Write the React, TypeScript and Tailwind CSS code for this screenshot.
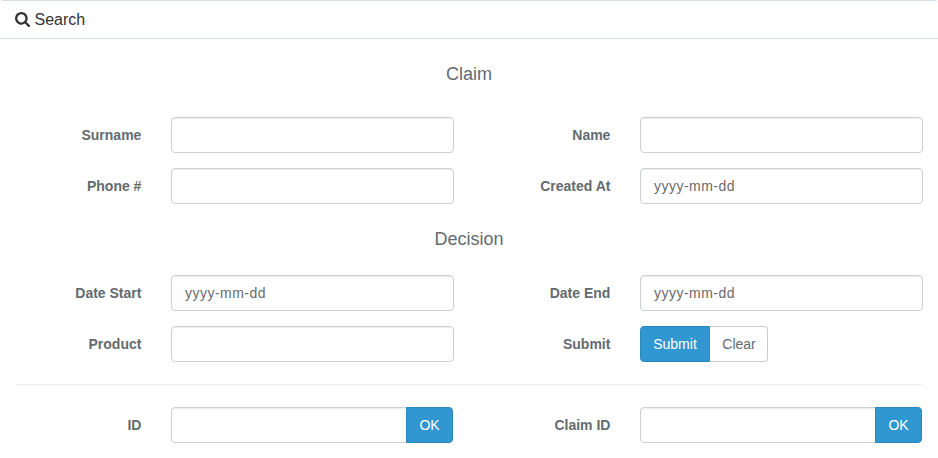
import type { ReactNode } from "react";

const controlClass =
  "block h-9 w-full min-w-0 border border-[#ccd0d2] bg-white pr-3 pl-[13px] pb-px text-sm text-[#555] shadow-[inset_0_1px_1px_rgba(0,0,0,0.075)] outline-none placeholder:text-[#6a6a6a] placeholder:tracking-[0.48px]";

function SearchIcon() {
  return (
    <svg viewBox="64 128 1664 1664" className="size-[15px]" fill="currentColor" aria-hidden="true">
      <path d="M1216 832q0-185-131.5-316.5t-316.5-131.5-316.5 131.5-131.5 316.5 131.5 316.5 316.5 131.5 316.5-131.5 131.5-316.5zm512 832q0 52-38 90t-90 38q-54 0-90-38l-343-342q-179 124-399 124-143 0-273.5-55.5t-225-150-150-225-55.5-273.5 55.5-273.5 150-225 225-150 273.5-55.5 273.5 55.5 225 150 150 225 55.5 273.5q0 220-124 399l343 343q37 37 37 90z" />
    </svg>
  );
}

function Field({ label, children }: { label: string; children: ReactNode }) {
  return (
    <div className="flex h-9 items-center pr-[15px]">
      <label className="w-[142px] shrink-0 pr-[0.6px] pb-px text-right text-sm font-bold text-[#636b6f]">{label}</label>
      <div className="ml-[29px] flex w-[283px]">{children}</div>
    </div>
  );
}

function TextField({ label, placeholder }: { label: string; placeholder?: string }) {
  return (
    <Field label={label}>
      <input type="text" aria-label={label} placeholder={placeholder} className={`${controlClass} rounded-[4px]`} />
    </Field>
  );
}

function LookupField({ label }: { label: string }) {
  return (
    <Field label={label}>
      <input type="text" aria-label={label} className={`${controlClass} rounded-l-[4px]`} />
      <button className="-ml-px mr-px h-9 w-[47px] shrink-0 rounded-r-[4px] border border-[#2a88bd] bg-[#3097d1] text-sm text-white">
        OK
      </button>
    </Field>
  );
}

export default function App() {
  return (
    <main className="h-[458px] w-full overflow-hidden rounded-[3px] bg-white font-['Liberation_Sans',Arial,sans-serif]">
      <header className="flex h-[39px] items-center gap-[4.5px] rounded-t-[3px] border-y border-[#d3e0e9] pl-[15px] text-[#333]">
        <SearchIcon />
        <h3 className="text-base">Search</h3>
      </header>
      <h4 className="mt-[25px] text-center text-lg leading-5 text-[#636b6f]">Claim</h4>
      <section className="mt-[33px] grid grid-cols-[469px_469px] gap-y-[15px]">
        <TextField label="Surname" />
        <TextField label="Name" />
        <TextField label="Phone #" />
        <TextField label="Created At" placeholder="yyyy-mm-dd" />
      </section>
      <h4 className="mt-[25px] text-center text-lg leading-5 text-[#636b6f]">Decision</h4>
      <section className="mt-[26px] grid grid-cols-[469px_469px] gap-y-[15px]">
        <TextField label="Date Start" placeholder="yyyy-mm-dd" />
        <TextField label="Date End" placeholder="yyyy-mm-dd" />
        <TextField label="Product" />
        <Field label="Submit">
          <button className="h-9 w-[70px] rounded-l-[4px] border border-[#2a88bd] bg-[#3097d1] text-sm text-white">
            Submit
          </button>
          <button className="-ml-px h-9 w-[59px] rounded-r-[4px] border border-[#ccc] border-l-[#2a88bd] bg-white pl-px text-sm text-[#636b6f]">
            Clear
          </button>
        </Field>
      </section>
      <hr className="mx-[15px] mt-[22px] border-[#eee]" />
      <section className="mt-[22px] grid grid-cols-[469px_469px]">
        <LookupField label="ID" />
        <LookupField label="Claim ID" />
      </section>
    </main>
  );
}
